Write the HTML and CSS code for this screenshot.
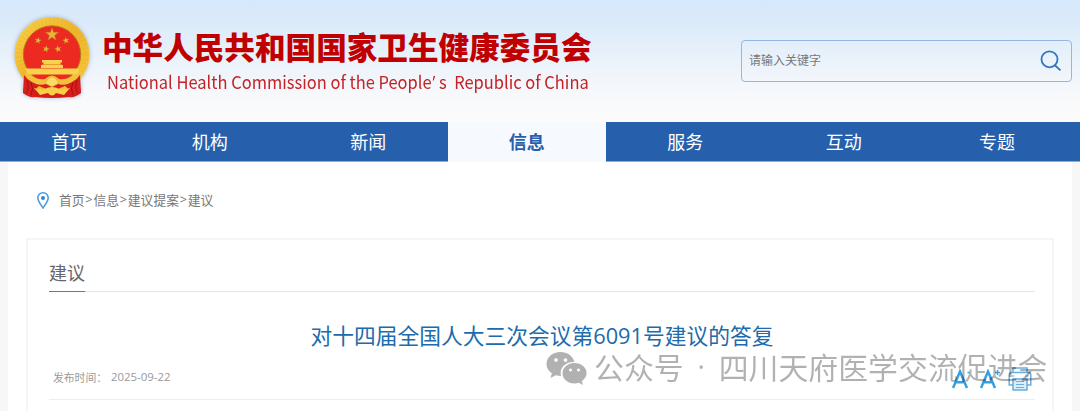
FILE: index.html
```html
<!DOCTYPE html>
<html lang="zh-CN">
<head>
    <meta charset="UTF-8">
    <meta name="viewport" content="width=device-width, initial-scale=1.0">
    <title>对十四届全国人大三次会议第6091号建议的答复</title>
    <link rel="stylesheet" href="styles.css">
</head>
<body>
    <header class="header">
        <div class="logo">
            <svg class="emblem" viewBox="0 0 76 84">
                <defs>
                    <linearGradient id="gold" x1="0" y1="0" x2="1" y2="1">
                        <stop offset="0" stop-color="#fbd449"/>
                        <stop offset=".5" stop-color="#eeb52b"/>
                        <stop offset="1" stop-color="#f8cd40"/>
                    </linearGradient>
                    <path id="star" d="M0-7 1.7-2.2 6.7-2.2 2.7.9 4.1 5.7 0 2.8-4.1 5.7-2.7.9-6.7-2.2-1.7-2.2z"/>
                </defs>
                <path d="M12 58 64 58 67 77Q61 82 55 81Q38 83 21 81Q15 82 9 77z" fill="#d51c1b"/>
                <circle cx="38" cy="38.500" r="37.5" fill="url(#gold)"/>
                <circle cx="38" cy="38.500" r="33" fill="none" stroke="#d99a22" stroke-width="6" stroke-dasharray="2 2" opacity=".15"/>
                <circle cx="38" cy="38.500" r="28.7" fill="#ec2a22" stroke="#b97a18" stroke-width="1"/>
                <g fill="#e9b43a" stroke="#b8651c" stroke-width=".4">
                    <use href="#star" transform="translate(38 18.500)"/>
                    <use href="#star" transform="translate(24 24.5) scale(.52) rotate(10)"/>
                    <use href="#star" transform="translate(52 24.5) scale(.52) rotate(-10)"/>
                    <use href="#star" transform="translate(32 33) scale(.52) rotate(15)"/>
                    <use href="#star" transform="translate(44 33) scale(.52) rotate(-15)"/>
                </g>
                <path d="M28 44h20v2.500h-1.500v2.500h2.500v3H27v-3h2.500v-2.500H28z" fill="#f7d351"/>
                <path d="M28 48.500h20" stroke="#d98b24" stroke-width=".7"/>
                <path d="M11 52.500h54v6H14z" fill="#f8d44d"/>
                <path d="M10 59Q15 67 28 67L38 62 48 67Q61 67 66 59L67 77 55 81Q57 74 51 70Q38 77 25 70Q19 74 21 81L9 77z" fill="#d91e1d"/>
                <path d="M10 55Q22 65 31 63Q38 56 45 63Q54 65 66 55L62 63Q53 71 44 68Q38 71 32 68Q23 71 14 63z" fill="#f4c13a"/>
                <path d="M31 67Q38 54 45 67L38 71z" fill="#f9dc63" stroke="#d89c28" stroke-width=".6"/>
                <path d="M20 72 29 74Q38 68 47 74L56 72 50 79 42 77Q38 82 34 77L26 79z" fill="#f7cf48"/>
                <path d="M13 64Q16 72 12 77M17 66Q20 73 17 79M63 64Q60 72 64 77M59 66Q56 73 59 79" fill="none" stroke="#a60f12"/>
            </svg>
            <div class="name">
                <h1>中华人民共和国国家卫生健康委员会</h1>
                <p>National Health Commission of the People<span class="apos">’</span>s&nbsp; Republic of China</p>
            </div>
        </div>
        <div class="search">
            <span>请输入关键字</span>
            <svg class="search-icon" viewBox="0 0 22 22">
                <circle cx="9.5" cy="9.3" r="8" />
                <path d="M14.6 15 20.5 20.4"/>
            </svg>
        </div>
    </header>

    <nav class="nav">
        <a>首页</a>
        <a>机构</a>
        <a>新闻</a>
        <a class="active">信息</a>
        <a>服务</a>
        <a>互动</a>
        <a>专题</a>
    </nav>

    <main class="main">
        <div class="crumb">
            <svg class="pin" viewBox="0 0 12 17">
                <path d="M6 .8C3 .8.8 3 .8 6 .8 9 3.6 12.4 6 16 8.4 12.4 11.2 9 11.2 6 11.2 3 9 .8 6 .8z"/>
                <circle cx="6" cy="6" r="2"/>
            </svg>
            <a>首页</a><i>&gt;</i><a>信息</a><i>&gt;</i><a>建议提案</a><i>&gt;</i><a>建议</a>
        </div>

        <div class="card">
            <div class="card-head"><span>建议</span></div>
            <h2>对十四届全国人大三次会议第6091号建议的答复</h2>
            <div class="info">
                <span class="label">发布时间：</span>
                <span class="date">2025-09-22</span>
                <div class="tools">
                    <svg class="font-icon" viewBox="0 0 20 20">
                        <path d="M1 19 8 2.5 15 19M3.6 13.2h8.8"/>
                        <path class="sign" d="M15.5 3.5h2"/>
                    </svg>
                    <svg class="font-icon" viewBox="0 0 20 20">
                        <path d="M1 19 8 2.5 15 19M3.6 13.2h8.8"/>
                        <path class="sign" d="M15 3.5h5M17.5 1v5"/>
                    </svg>
                    <svg class="print" viewBox="0 0 24 24">
                        <path d="M5 5.500V1h14v4.500M5 18H1.2V8q0-2.500 2.500-2.500h16.600q2.500 0 2.500 2.500v10H19"/>
                        <path d="M5 12h14v11H5z" fill="#dcecf8"/>
                        <path d="M3.500 9h3M17.500 9h3M8 14.500h8M8 17.500h8M8 20.500h8" stroke-width="1.200"/>
                    </svg>
                </div>
            </div>
        </div>
    </main>

    <div class="watermark">
        <svg viewBox="0 0 41 34">
            <path fill-rule="evenodd" d="M14.500 1C6.500 1 .5 6.200.5 13c0 4 2 7 5.300 9.300L4.500 27l5.300-2.800c1.700.5 3.400.8 5.200.8-2-8 4.500-14.500 13.300-14C27 5 21.500 1 14.500 1zM10 7.200a1.800 1.800 0 1 0 .01 0zM19.500 7.200a1.800 1.800 0 1 0 .01 0z"/>
            <path fill-rule="evenodd" d="M28.500 12c-6.800 0-12 4.500-12 10.200s5.200 10.200 12 10.200c1.500 0 3-.2 4.200-.6L37 34l-1.200-4c3-1.900 4.800-4.700 4.800-7.800C40.600 16.500 35.300 12 28.500 12zM24.500 17.500a1.500 1.500 0 1 0 .01 0zM32.500 17.500a1.500 1.500 0 1 0 .01 0z"/>
        </svg>
        <span>公众号</span><span class="wm-dot">·</span><span>四川天府医学交流促进会</span>
    </div>
</body>
</html>
```

FILE: styles.css
```css
*{
    box-sizing: border-box;
    margin: 0;
    padding: 0;
}
body{
    height: 411px;
    overflow: hidden;
    position: relative;
    background-color: #f7f7f7;
    font-family: "Open Sans", "Noto Sans CJK SC", sans-serif;
}
.header{
    height: 122px;
    padding: 0 8px 0 14px;
    display: flex;
    justify-content: space-between;
    background: linear-gradient(#d6e8fb 0%, #dcebfa 20%, #f4f7fb 70%, #fbfbfb 92%);
}
.logo{
    display: flex;
}
.emblem{
    width: 76px;
    height: 84px;
    margin-top: 16px;
    filter: drop-shadow(0 0 2px rgba(90, 120, 160, .5));
}
.name{
    margin: 28px 0 0 12px;
    font-family: "Noto Sans CJK SC", sans-serif;
    white-space: nowrap;
}
.name h1{
    font-size: 30.600px;
    line-height: 36px;
    font-weight: 900;
    color: #c00000;
}
.name p{
    margin: 4px 0 0 5px;
    font-size: 17.800px;
    line-height: 26px;
    color: #c52226;
    transform: scaleX(.927);
    transform-origin: left;
}
.apos{
    margin: 0 4px 0 1px;
    font-family: "Open Sans", sans-serif;
}
.search{
    width: 331px;
    height: 42px;
    margin-top: 40px;
    padding: 0 9px 2px 7px;
    display: flex;
    align-items: center;
    justify-content: space-between;
    border: 1px solid #92b8e0;
    border-radius: 4px;
    font-size: 12px;
    color: #777;
}
.search-icon{
    width: 22px;
    height: 22px;
    margin-top: 2px;
    fill: none;
    stroke: #2e78c2;
    stroke-width: 1.800;
}
.nav{
    height: 40px;
    padding: 0 9px 0 8px;
    display: grid;
    grid-template-columns: 122.500px repeat(5, 158.500px) 1fr;
    background-color: #265fac;
    border-bottom: 1px solid #8aaeda;
}
.nav a{
    height: 40px;
    line-height: 40px;
    text-align: center;
    font-size: 18px;
    color: #fff;
}
.nav .active{
    background-color: #f6faff;
    color: #265fac;
    font-weight: bold;
}
.main{
    height: 249px;
    margin: 0 8px;
    padding: 0 18px;
    background-color: #fff;
}
.crumb{
    height: 76px;
    padding: 0 0 2px 11px;
    display: flex;
    align-items: center;
    font-size: 12.800px;
    color: #777;
}
.crumb i{
    width: 8.800px;
    text-align: center;
    font-style: normal;
}
.pin{
    width: 12px;
    height: 17px;
    margin: 2px 10px 0 0;
    fill: none;
    stroke: #4b9ce0;
    stroke-width: 1.600;
}
.pin circle{
    fill: #2d86d2;
    stroke: none;
}
.card{
    height: 173px;
    border: 2px solid #f5f5f5;
    border-bottom: 0;
    padding: 16px 17px 0 21px;
}
.card-head{
    height: 36px;
    border-bottom: 1px solid #e6e6e6;
    font-size: 18px;
    line-height: 35px;
    color: #666;
}
.card-head span{
    display: inline-block;
    height: 36px;
    border-bottom: 1px solid #4a7fb8;
}
.card h2{
    margin-top: 28px;
    text-align: center;
    font-size: 21.750px;
    line-height: 32px;
    font-weight: normal;
    color: #206bab;
}
.info{
    height: 48px;
    display: flex;
    align-items: center;
    padding: 2px 3px 0 4px;
    border-bottom: 1px solid #eee;
    font-size: 10.800px;
    color: #999;
}
.label{
    width: 58px;
    white-space: nowrap;
}
.date{
    font-size: 11.400px;
}
.tools{
    margin: 4px 0 0 auto;
    display: flex;
    align-items: center;
}
.font-icon{
    width: 20px;
    height: 20px;
    margin-right: 8px;
    fill: none;
    stroke: #36a0e2;
    stroke-width: 2.500;
}
.font-icon .sign{
    stroke-width: 1.500;
}
.print{
    width: 24px;
    height: 24px;
    fill: none;
    stroke: #68afe0;
    stroke-width: 1.500;
}
/* account name laid over the page */
.watermark{
    position: absolute;
    top: 346px;
    left: 546px;
    height: 40px;
    display: flex;
    align-items: center;
    font-family: "Noto Sans CJK SC", sans-serif;
    font-size: 29.900px;
    line-height: 40px;
    white-space: nowrap;
    color: #000;
    opacity: .3;
}
.watermark svg{
    width: 41px;
    height: 34px;
    margin: 3px 7px 0 0;
}
.wm-dot{
    width: 35px;
    text-align: center;
    font-family: "Open Sans", sans-serif;
}
```
